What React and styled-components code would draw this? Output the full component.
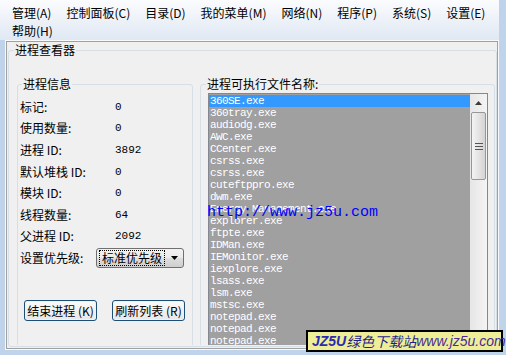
import React from "react";
import styled, { createGlobalStyle } from "styled-components";

const Global = createGlobalStyle`
  html, body { margin: 0; padding: 0; }
  body {
    background: #bfd3ea;
    font-family: "Noto Sans CJK SC", "Noto Sans", sans-serif;
  }
`;

const Screen = styled.div`
  position: relative;
  width: 506px;
  height: 355px;
  overflow: hidden;
  background: #bfd3ea;
`;

const MenuBar = styled.div`
  box-sizing: border-box;
  width: 499px;
  height: 40px;
  padding: 4px 0 0 4.5px;
  display: flex;
  flex-wrap: wrap;
  align-content: flex-start;
  background: linear-gradient(#fbfcfe, #dfe8f3);
`;

const MenuItem = styled.span`
  padding: 0 7.5px;
  height: 18px;
  line-height: 18px;
  font-size: 12px;
  color: #000;
  white-space: nowrap;
`;

const Frame = styled.div`
  box-sizing: border-box;
  margin-left: 5px;
  width: 494px;
  height: 310px;
  border: 1px solid #f9f9f9;
  box-shadow: inset 0 0 0 1px #a0a0a0;
  background: #f0f0f0;
  padding: 1px 1px 2px 2px;
`;

const Group = styled.fieldset`
  box-sizing: border-box;
  margin: 0;
  padding: 0;
  min-width: 0;
  border: 1px solid #d5dfe5;
  border-radius: 3px;
  height: ${(p) => p.$h || "auto"};
  width: ${(p) => p.$w || "auto"};
  flex: none;
`;

const Legend = styled.legend`
  margin-left: ${(p) => p.$ml || 5}px;
  padding: 0 1px;
  font-size: 12px;
  line-height: 16px;
  color: #000;
`;

const GroupBody = styled.div`
  box-sizing: border-box;
  height: 287px;
  overflow: hidden;
  display: flex;
  gap: 7px;
  padding: 18px 0 0 8px;
`;

const InfoBody = styled.div`
  padding: 4px 0 0 2px;
`;

const InfoGrid = styled.div`
  display: grid;
  grid-template-columns: 95px auto;
  grid-auto-rows: 21.6px;
  align-items: center;
`;

const Label = styled.span`
  font-size: 12px;
  line-height: 16px;
  color: #000;
  white-space: nowrap;
`;

const Value = styled.span`
  font-family: "Liberation Mono", monospace;
  font-size: 11px;
  color: #000;
`;

const PriorityRow = styled.div`
  display: flex;
  align-items: center;
  height: 21.6px;
`;

const PriorityLabel = styled(Label)`
  width: 76px;
`;

const Combo = styled.div`
  box-sizing: border-box;
  width: 88px;
  height: 20px;
  border: 1px solid #707070;
  border-radius: 3px;
  background: linear-gradient(#f2f2f2 0%, #ebebeb 50%, #dddddd 51%, #cfcfcf 100%);
  display: flex;
  align-items: center;
  padding: 0 3px;
  gap: 4px;
`;

const ComboText = styled.span`
  font-size: 12px;
  line-height: 14px;
  outline: 1px dotted #000;
  outline-offset: 0;
  padding: 0 2px;
  color: #000;
`;

const ComboArrow = styled.svg`
  margin-left: auto;
  margin-right: 2px;
`;

const ButtonRow = styled.div`
  display: flex;
  gap: 15px;
  margin: 31px 0 0 4px;
`;

const Button = styled.div`
  box-sizing: border-box;
  width: 73px;
  height: 21px;
  border: 1px solid #1c4f78;
  border-radius: 3px;
  background: linear-gradient(#fbfbfb, #f0f0f0 50%, #e8e8e8);
  box-shadow: inset 0 0 0 1px #e6f4fc;
  font-size: 12px;
  line-height: 19px;
  text-align: center;
  color: #000;
  white-space: nowrap;
`;

const ListBox = styled.div`
  box-sizing: border-box;
  margin: 1px 0 0 7px;
  width: 280px;
  height: 270px;
  border: 1px solid #828790;
  background: #a0a0a0;
  padding-top: 1px;
  display: flex;
`;

const Items = styled.div`
  flex: 1;
`;

const Item = styled.div`
  height: 12px;
  line-height: 12px;
  padding-left: 1px;
  font-family: "Liberation Mono", monospace;
  font-size: 11px;
  letter-spacing: -0.6px;
  color: #fff;
  white-space: pre;
  background: ${(p) => (p.$sel ? "#3399ff" : "transparent")};
`;

const ScrollBar = styled.div`
  width: 17px;
  flex: none;
  margin-top: -1px;
  background: linear-gradient(to right, #e6e6e6, #f4f4f4);
  display: flex;
  flex-direction: column;
  align-items: center;
`;

const ArrowBtn = styled.div`
  height: 17px;
  width: 17px;
  display: flex;
  align-items: center;
  justify-content: center;
`;

const Thumb = styled.div`
  box-sizing: border-box;
  width: 15px;
  height: 68px;
  margin-top: 1px;
  border: 1px solid #979797;
  border-radius: 2px;
  background: linear-gradient(to right, #f4f4f4, #e4e4e4 50%, #d4d4d4);
  display: flex;
  align-items: center;
  justify-content: center;
`;

const UrlMark = styled.div`
  position: absolute;
  left: 207px;
  top: 204px;
  font-family: "Liberation Mono", monospace;
  font-size: 15px;
  line-height: 18px;
  color: #0000ff;
  white-space: nowrap;
`;

const Stamp = styled.div`
  position: absolute;
  left: 306px;
  top: 330px;
  box-sizing: border-box;
  width: 197px;
  height: 22px;
  border: 2px solid #000;
  background: #eeee99;
  display: flex;
  align-items: center;
  padding-left: 4px;
  font-style: italic;
  font-size: 14px;
  white-space: nowrap;
`;

const StampBrand = styled.span`
  font-family: "Liberation Sans", sans-serif;
  font-weight: bold;
  color: #2b2bb0;
`;

const StampCn = styled.span`
  font-family: "Noto Sans CJK SC", sans-serif;
  color: #1e1e8c;
`;

const StampUrl = styled.span`
  font-family: "Liberation Sans", sans-serif;
  color: #4a2a9a;
`;

const menus = [
  "管理(A)",
  "控制面板(C)",
  "目录(D)",
  "我的菜单(M)",
  "网络(N)",
  "程序(P)",
  "系统(S)",
  "设置(E)",
  "帮助(H)",
];

const info = [
  ["标记:", "0"],
  ["使用数量:", "0"],
  ["进程 ID:", "3892"],
  ["默认堆栈 ID:", "0"],
  ["模块 ID:", "0"],
  ["线程数量:", "64"],
  ["父进程 ID:", "2092"],
];

const procs = [
  "360SE.exe",
  "360tray.exe",
  "audiodg.exe",
  "AWC.exe",
  "CCenter.exe",
  "csrss.exe",
  "csrss.exe",
  "cuteftppro.exe",
  "dwm.exe",
  "Energy Management.exe",
  "explorer.exe",
  "ftpte.exe",
  "IDMan.exe",
  "IEMonitor.exe",
  "iexplore.exe",
  "lsass.exe",
  "lsm.exe",
  "mstsc.exe",
  "notepad.exe",
  "notepad.exe",
  "notepad.exe",
  "QQ.exe",
];

export default function App() {
  return (
    <Screen>
      <Global />
      <MenuBar>
        {menus.map((m) => (
          <MenuItem key={m}>{m}</MenuItem>
        ))}
      </MenuBar>
      <Frame>
        <Group $h="305px">
          <Legend $ml={5}>进程查看器</Legend>
          <GroupBody>
            <Group $w="176px" $h="300px">
              <Legend $ml={4}>进程信息</Legend>
              <InfoBody>
                <InfoGrid>
                  {info.map(([l, v]) => (
                    <React.Fragment key={l}>
                      <Label>{l}</Label>
                      <Value>{v}</Value>
                    </React.Fragment>
                  ))}
                </InfoGrid>
                <PriorityRow>
                  <PriorityLabel>设置优先级:</PriorityLabel>
                  <Combo>
                    <ComboText>标准优先级</ComboText>
                    <ComboArrow width="7" height="4" viewBox="0 0 7 4">
                      <path d="M0 0 H7 L3.5 4 Z" fill="#000" />
                    </ComboArrow>
                  </Combo>
                </PriorityRow>
                <ButtonRow>
                  <Button>结束进程 (K)</Button>
                  <Button>刷新列表 (R)</Button>
                </ButtonRow>
              </InfoBody>
            </Group>
            <Group $w="295px" $h="300px">
              <Legend $ml={5}>进程可执行文件名称:</Legend>
              <ListBox>
                <Items>
                  {procs.map((p, i) => (
                    <Item key={i} $sel={i === 0}>
                      {p}
                    </Item>
                  ))}
                </Items>
                <ScrollBar>
                  <ArrowBtn>
                    <svg width="7" height="4" viewBox="0 0 7 4">
                      <path d="M3.5 0 L7 4 H0 Z" fill="#3c3c3c" />
                    </svg>
                  </ArrowBtn>
                  <Thumb>
                    <svg width="8" height="7" viewBox="0 0 8 7">
                      <path d="M0 0.5 H8 M0 3.5 H8 M0 6.5 H8" stroke="#555" strokeWidth="1" />
                    </svg>
                  </Thumb>
                </ScrollBar>
              </ListBox>
            </Group>
          </GroupBody>
        </Group>
      </Frame>
      <UrlMark>http://www.jz5u.com</UrlMark>
      <Stamp>
        <StampBrand>JZ5U</StampBrand>
        <StampCn>绿色下载站</StampCn>
        <StampUrl>www.jz5u.com</StampUrl>
      </Stamp>
    </Screen>
  );
}
